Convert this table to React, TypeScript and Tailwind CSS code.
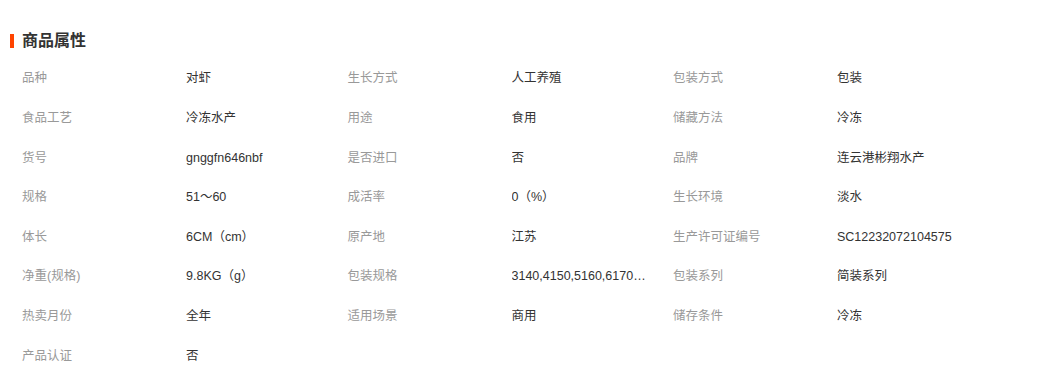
import React from "react";

const rows: [string, string][][] = [
  [["品种", "对虾"], ["生长方式", "人工养殖"], ["包装方式", "包装"]],
  [["食品工艺", "冷冻水产"], ["用途", "食用"], ["储藏方法", "冷冻"]],
  [["货号", "gnggfn646nbf"], ["是否进口", "否"], ["品牌", "连云港彬翔水产"]],
  [["规格", "51～60"], ["成活率", "0（%）"], ["生长环境", "淡水"]],
  [["体长", "6CM（cm）"], ["原产地", "江苏"], ["生产许可证编号", "SC12232072104575"]],
  [["净重(规格)", "9.8KG（g）"], ["包装规格", "3140,4150,5160,6170,7180,8190"], ["包装系列", "简装系列"]],
  [["热卖月份", "全年"], ["适用场景", "商用"], ["储存条件", "冷冻"]],
  [["产品认证", "否"]],
];

export default function App() {
  return (
    <div
      className="w-[1046px] h-[380px] bg-white"
      style={{ fontFamily: '"Liberation Sans", "Noto Sans CJK SC", sans-serif' }}
    >
      <div className="flex items-center pt-[31px] pl-[10px] h-[51px]">
        <div className="w-[4px] h-[14px] bg-[#ff4400]" />
        <div className="ml-[8px] text-[16px] font-bold text-[#333333] leading-[20px]">商品属性</div>
      </div>
      <div className="pl-[22px] pt-[8px]">
        {rows.map((r, i) => (
          <div key={i} className="flex h-[39.6px] items-center text-[12.5px]">
            {r.map(([k, v], j) => (
              <div key={j} className="flex w-[325.5px]">
                <div className="w-[164px] shrink-0 text-[#999999] whitespace-nowrap">{k}</div>
                <div className="w-[161.5px] shrink-0 pr-[24px] text-[#333333] whitespace-nowrap overflow-hidden text-ellipsis">
                  {v}
                </div>
              </div>
            ))}
          </div>
        ))}
      </div>
    </div>
  );
}
